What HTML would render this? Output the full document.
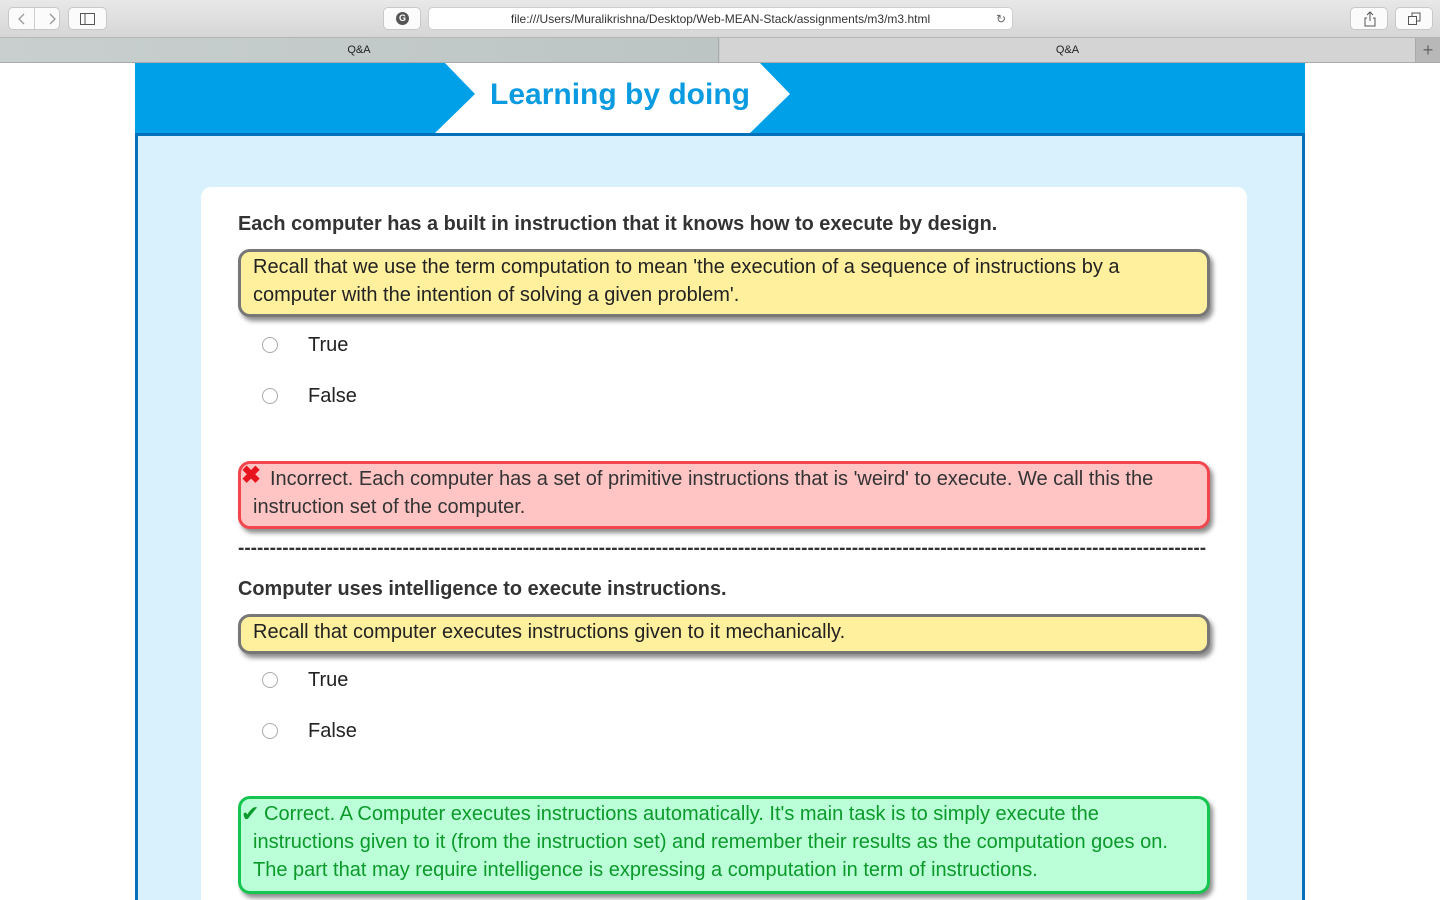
<!DOCTYPE html>
<html><head><meta charset="utf-8"><style>
*{box-sizing:border-box;margin:0;padding:0}
html,body{width:1440px;height:900px;overflow:hidden}
body{background:#fff;font-family:"Liberation Sans",Arial,sans-serif;position:relative}
.tb{position:absolute;left:0;top:0;width:1440px;height:38px;background:linear-gradient(#e8e8e8,#d6d6d6);border-bottom:1px solid #b5b5b5}
.btn{position:absolute;top:7px;height:23px;background:#fbfbfb;border:1px solid #c8c8c8;border-radius:5px}
.url{position:absolute;left:428px;top:7px;width:585px;height:23px;background:#fff;border:1px solid #cfcfcf;border-radius:5px;font-size:12px;color:#333;text-align:center;line-height:22px}
.tabs{position:absolute;left:0;top:38px;width:1440px;height:25px;background:#c5cbcb;border-bottom:1px solid #aaa;font-size:11px;color:#222}
.tab{position:absolute;top:0;height:24px;line-height:24px;text-align:center}
.hdr{position:absolute;left:135px;top:63px;width:1170px;height:72px;background:#00a0e9}
.frame{position:absolute;left:135px;top:133px;width:1170px;height:767px;background:#d9f0fd;border:3px solid #0070b8;border-bottom:none}
.card{position:absolute;left:201px;top:187px;width:1046px;height:713px;background:#fff;border-radius:10px 10px 0 0}
.q{position:absolute;left:238px;font-weight:bold;font-size:19.9px;color:#333}
.box{position:absolute;left:238px;width:972px;border:3px solid #777;border-radius:12px;background:#fff09e;font-size:20px;line-height:28px;color:#222;padding:1px 12px;box-shadow:3px 4px 5px rgba(0,0,0,.45)}
.red{background:#ffc4c4;border-color:#f2454d}
.grn{background:#baffd7;border-color:#16c450;color:#0b9a2a}
.opt{position:absolute;left:262px;font-size:20px;color:#222}
.opt i{display:inline-block;width:16px;height:16px;border:1px solid #aaa;border-radius:50%;vertical-align:-2px;margin-right:30px;background:#fff}
.sp{display:inline-block}
</style></head><body>
<div class="tb">
<div class="btn" style="left:8px;width:52px"><span style="position:absolute;left:25px;top:0;width:1px;height:21px;background:#ccc"></span>
<svg style="position:absolute;left:8px;top:5px" width="40" height="12"><path d="M7 1L2 6L7 11M33 1L38 6L33 11" stroke="#999" fill="none" stroke-width="1.3"/></svg></div>
<div class="btn" style="left:68px;width:39px"><svg style="position:absolute;left:11px;top:5px" width="16" height="12"><rect x="0.5" y="0.5" width="14" height="11" fill="none" stroke="#555"/><line x1="5" y1="0" x2="5" y2="12" stroke="#555"/></svg></div>
<div class="btn" style="left:383px;width:38px"><span style="position:absolute;left:12px;top:4px;width:13px;height:13px;border-radius:50%;background:#555;color:#fff;font-size:9px;line-height:13px;text-align:center;font-weight:bold">G</span></div>
<div class="url">file:///Users/Muralikrishna/Desktop/Web-MEAN-Stack/assignments/m3/m3.html<span style="position:absolute;right:6px;color:#666">↻</span></div>
<div class="btn" style="left:1350px;width:38px"><svg style="position:absolute;left:11px;top:3px" width="16" height="16"><path d="M8 1V10M5 4L8 1L11 4M5 7H3V15H13V7H11" stroke="#555" fill="none"/></svg></div>
<div class="btn" style="left:1395px;width:38px"><svg style="position:absolute;left:12px;top:4px" width="14" height="14"><rect x="0.5" y="4.5" width="8" height="8" fill="none" stroke="#555"/><path d="M4 4V1H12V9H9" stroke="#555" fill="none"/></svg></div>
</div>
<div class="tabs">
<div class="tab" style="left:0;width:719px;background:linear-gradient(90deg,#c9cfcf,#bcc4c4);border-right:1px solid #aaa">Q&amp;A</div>
<div class="tab" style="left:720px;width:695px;background:#d4d4d4">Q&amp;A</div>
<div class="tab" style="left:1415px;width:25px;background:#b8b8b8;border-left:1px solid #aaa;font-size:18px;color:#666">+</div>
</div>
<div class="hdr"></div>
<svg style="position:absolute;left:430px;top:63px" width="365" height="70"><polygon points="15,0 330,0 360,31 320,70 5,70 45,31" fill="#fff"/></svg>
<div style="position:absolute;left:490px;top:78px;font-size:30px;font-weight:bold;color:#0a9be0">Learning by doing</div>
<div class="frame"></div>
<div class="card"></div>
<div class="q" style="top:213px">Each computer has a built in instruction that it knows how to execute by design.</div>
<div class="box" style="top:249px;height:68px">Recall that we use the term computation to mean 'the execution of a sequence of instructions by a computer with the intention of solving a given problem'.</div>
<div class="opt" style="top:334px"><i></i>True</div>
<div class="opt" style="top:385px"><i></i>False</div>
<div class="box red" style="top:461px;height:68px;color:#333"><span style="color:#e8141d;font-weight:bold;font-size:24px;position:absolute;left:0;top:-2px">✖</span><span class="sp" style="width:17px"></span>Incorrect. Each computer has a set of primitive instructions that is 'weird' to execute. We call this the instruction set of the computer.</div>
<div style="position:absolute;left:238px;top:538px;width:968px;overflow:hidden;white-space:nowrap;font-weight:bold;font-size:19px;color:#333">------------------------------------------------------------------------------------------------------------------------------------------------------------------</div>
<div class="q" style="top:578px">Computer uses intelligence to execute instructions.</div>
<div class="box" style="top:614px;height:40px">Recall that computer executes instructions given to it mechanically.</div>
<div class="opt" style="top:669px"><i></i>True</div>
<div class="opt" style="top:720px"><i></i>False</div>
<div class="box grn" style="top:796px;height:98px"><span style="position:absolute;left:0;top:1px;font-size:22px;color:#0b9a2a">✔</span><span class="sp" style="width:11px"></span>Correct. A Computer executes instructions automatically. It's main task is to simply execute the instructions given to it (from the instruction set) and remember their results as the computation goes on. The part that may require intelligence is expressing a computation in term of instructions.</div>
</body></html>
